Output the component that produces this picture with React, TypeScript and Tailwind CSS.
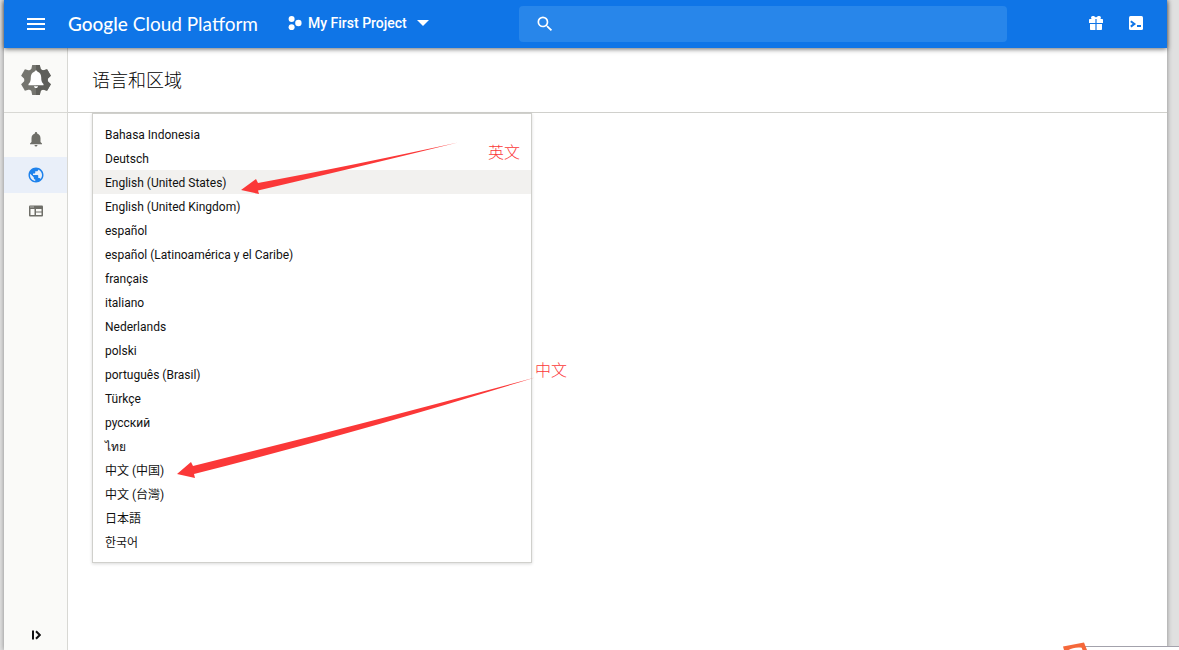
import type { ReactNode } from "react";
import { MdMenu, MdNotifications, MdPublic, MdSearch } from "react-icons/md";

const languages = [
  { label: "Bahasa Indonesia", code: "id" },
  { label: "Deutsch", code: "de" },
  { label: "English (United States)", code: "en-US" },
  { label: "English (United Kingdom)", code: "en-GB" },
  { label: "español", code: "es" },
  { label: "español (Latinoamérica y el Caribe)", code: "es-419" },
  { label: "français", code: "fr" },
  { label: "italiano", code: "it" },
  { label: "Nederlands", code: "nl" },
  { label: "polski", code: "pl" },
  { label: "português (Brasil)", code: "pt-BR" },
  { label: "Türkçe", code: "tr" },
  { label: "русский", code: "ru" },
  { label: "ไทย", code: "th" },
  { label: "中文 (中国)", code: "zh-CN" },
  { label: "中文 (台灣)", code: "zh-TW" },
  { label: "日本語", code: "ja" },
  { label: "한국어", code: "ko" },
];

function ProjectIcon() {
  return (
    <svg viewBox="0 0 14 14" className="size-3.5" fill="currentColor" aria-hidden="true">
      <circle cx="3.6" cy="3" r="3" />
      <circle cx="10.4" cy="7" r="3.2" />
      <circle cx="3.6" cy="11.2" r="3" />
    </svg>
  );
}

function GiftIcon() {
  return (
    <svg viewBox="0 0 14 14" className="size-3.5" fill="currentColor" aria-hidden="true">
      <path d="M1 3h1.600C1.400 1.500 2.200 0 3.800 0 5.200 0 6.200.5 7 1.600 7.800.5 8.800 0 10.200 0c1.600 0 2.400 1.500 1.200 3H13c.6 0 1 .4 1 1v3H7.600V3H6.400v4H0V4c0-.6.4-1 1-1z" />
      <path d="M1 8h5.400v6H2c-.6 0-1-.4-1-1zM7.600 8H13v5c0 .6-.4 1-1 1H7.600z" />
    </svg>
  );
}

function ShellIcon() {
  return (
    <svg viewBox="0 0 14 14" className="size-3.5" aria-hidden="true">
      <rect width="14" height="14" rx="1.500" fill="#fff" />
      <path d="M1.800 5.200 5.400 7.900 1.800 10.600" fill="none" stroke="#0f75e7" strokeWidth="2" />
      <path d="M8 9h4v2H8z" fill="#0f75e7" />
    </svg>
  );
}

function Gear() {
  return (
    <>
      <circle cx="15" cy="15" r="11.800" />
      {[0, 60, 120].map((angle) => (
        <path key={angle} d="M11.200 0h7.600l1 4.500v21l-1 4.500h-7.600l-1-4.500v-21z" transform={`rotate(${angle} 15 15)`} />
      ))}
    </>
  );
}

function PreferencesIcon() {
  return (
    <svg viewBox="0 0 30 30" className="size-[30px]" aria-hidden="true">
      <defs>
        <clipPath id="gear-right">
          <path d="M15 0h15v30H15z" />
        </clipPath>
      </defs>
      <g fill="#75756f">
        <Gear />
      </g>
      <g fill="#5f5f5a" clipPath="url(#gear-right)">
        <Gear />
      </g>
      <path
        d="M15 5.500c.8 0 1.400.6 1.500 1.300 2.400.8 3.700 2.900 3.700 5.500 0 3.200.5 5 2.300 6.700v1.200h-15V19c1.800-1.700 2.300-3.500 2.300-6.700 0-2.600 1.300-4.700 3.700-5.500.1-.7.700-1.300 1.500-1.300zM13 21.200h4c0 1-.9 1.800-2 1.800s-2-.8-2-1.800z"
        fill="#fff"
      />
    </svg>
  );
}

function PanelIcon() {
  return (
    <svg viewBox="0 0 14 12" className="h-3 w-3.5" aria-hidden="true">
      <rect y="0.500" width="14" height="11" rx="1" fill="#6e6e68" />
      <path d="M1.500 4h4v6h-4zM7 4h5.500v2.400H7zM7 7.600h5.500V10H7zM1.500 1.600h1v1h-1zM3.500 1.600h1v1h-1z" fill="#fafaf8" />
    </svg>
  );
}

function ExpandIcon() {
  return (
    <svg viewBox="0 0 10 10" className="size-2.5" fill="none" stroke="#111" strokeWidth="2" aria-hidden="true">
      <path d="M2 0.500v9M5 1.200 8.800 5 5 8.800" />
    </svg>
  );
}

function NavItem({ label, active, children }: { label: string; active?: boolean; children: ReactNode }) {
  return (
    <a
      href="#"
      aria-label={label}
      aria-current={active ? "page" : undefined}
      className={
        active
          ? "flex h-9 items-center justify-center bg-[#e9eff9] pl-px text-[#1e82ec]"
          : "flex h-9 items-center justify-center pl-px text-[#6e6e68]"
      }
    >
      {children}
    </a>
  );
}

function TopBar() {
  return (
    <header className="relative z-10 flex h-12 items-center bg-[#0f75e7] text-white shadow-[0_1px_5px_rgba(0,0,0,0.6)]">
      <div className="flex w-16 shrink-0 justify-center">
        <button type="button" aria-label="Menu">
          <MdMenu className="size-6" />
        </button>
      </div>
      <a href="#" className="w-[196px] shrink-0 font-[Lato,sans-serif] text-[19px] leading-6 whitespace-nowrap">
        <span className="font-medium">Google</span> Cloud Platform
      </a>
      <button type="button" className="ml-6 flex shrink-0 items-center gap-1.5 pb-0.5 text-sm font-medium whitespace-nowrap">
        <ProjectIcon />
        <span>My First Project</span>
        <svg viewBox="0 0 12 6" className="ml-1 h-1.5 w-3" fill="currentColor" aria-hidden="true">
          <path d="M0 0h12L6 6z" />
        </svg>
      </button>
      <label className="ml-[90px] flex h-9 w-[488px] min-w-0 items-center gap-3 rounded-sm bg-[#2886ea] px-4">
        <MdSearch className="size-5 shrink-0" />
        <input type="text" aria-label="Search" className="min-w-0 flex-1 bg-transparent text-sm outline-none" />
      </label>
      <div className="mr-6 ml-auto flex shrink-0 gap-[26px] pb-0.5">
        <button type="button" aria-label="Free trial">
          <GiftIcon />
        </button>
        <button type="button" aria-label="Cloud Shell">
          <ShellIcon />
        </button>
      </div>
    </header>
  );
}

function Sidebar() {
  return (
    <aside className="flex w-16 shrink-0 flex-col border-r border-[#d8d8d4] bg-[#fafaf8]">
      <div className="flex h-[65px] items-center justify-center border-b border-[#d8d8d4] pl-px">
        <PreferencesIcon />
      </div>
      <nav className="flex-1 pt-2">
        <NavItem label="Notifications">
          <MdNotifications className="size-[18px]" />
        </NavItem>
        <NavItem label="Language and region" active>
          <MdPublic className="size-[18px]" />
        </NavItem>
        <NavItem label="Display">
          <PanelIcon />
        </NavItem>
      </nav>
      <button type="button" aria-label="Expand" className="flex h-[30px] items-center justify-center pl-px">
        <ExpandIcon />
      </button>
    </aside>
  );
}

function Annotations() {
  return (
    <div className="pointer-events-none absolute top-0 left-0 h-[450px] w-[480px] font-['Noto_Sans_CJK_SC',sans-serif] text-base leading-5 text-[#fb3838]">
      <svg viewBox="92 113 480 450" className="size-full" fill="#fb3838" aria-hidden="true">
        <path d="M241 190 256 179 258 183Q350 166 458 142.500Q350 169 258 190.500L259 194z" />
        <path d="M177 474 191 462 193 466Q360 425 535 377.500Q360 432 194 474L195 478z" />
      </svg>
      <span className="absolute top-7 left-[396px] font-light">英文</span>
      <span className="absolute top-[246px] left-[443px] font-light">中文</span>
    </div>
  );
}

export default function App() {
  return (
    <div className="relative flex min-h-screen overflow-hidden bg-[#e0e0e0] pr-3 pl-1 font-[Roboto,'Noto_Sans_CJK_SC',sans-serif]">
      <div className="flex min-w-0 flex-1 flex-col bg-white shadow-[0_0_5px_rgba(0,0,0,0.4)]">
        <TopBar />
        <div className="flex flex-1">
          <Sidebar />
          <main className="min-w-0 flex-1">
            <div className="flex h-[65px] items-center border-b border-[#d0d0cc] px-6 pb-0.5">
              <h1 className="font-['Noto_Sans_CJK_SC',sans-serif] text-lg font-light text-black">语言和区域</h1>
            </div>
            <div className="relative px-6">
              <ul
                role="listbox"
                aria-label="语言"
                className="w-full max-w-[440px] border border-[#d0d0cc] bg-white py-2 shadow-[0_1px_3px_rgba(0,0,0,0.15)]"
              >
                {languages.map(({ label, code }) => (
                  <li
                    key={code}
                    lang={code}
                    role="option"
                    aria-selected={code === "en-US"}
                    className="h-6 cursor-pointer px-3 text-xs leading-[26px] text-[#111] aria-selected:bg-[#f2f1ef]"
                  >
                    {label}
                  </li>
                ))}
              </ul>
              <div className="absolute top-0 left-6">
                <Annotations />
              </div>
            </div>
          </main>
        </div>
      </div>
      <div className="absolute right-0 bottom-0 z-20 h-2 w-[117px]">
        <svg viewBox="0 0 117 8" className="h-2 w-full" aria-hidden="true">
          <path d="M24 4h93v4H24z" fill="#fff" />
          <path d="M23 4h94v1H23z" fill="#a3a2ac" />
          <path d="M1 4.500 22 .5 25 8h-4.500l-.8-2.200C15 5 10 6 6.500 8H2z" fill="#f5683a" />
        </svg>
      </div>
    </div>
  );
}
